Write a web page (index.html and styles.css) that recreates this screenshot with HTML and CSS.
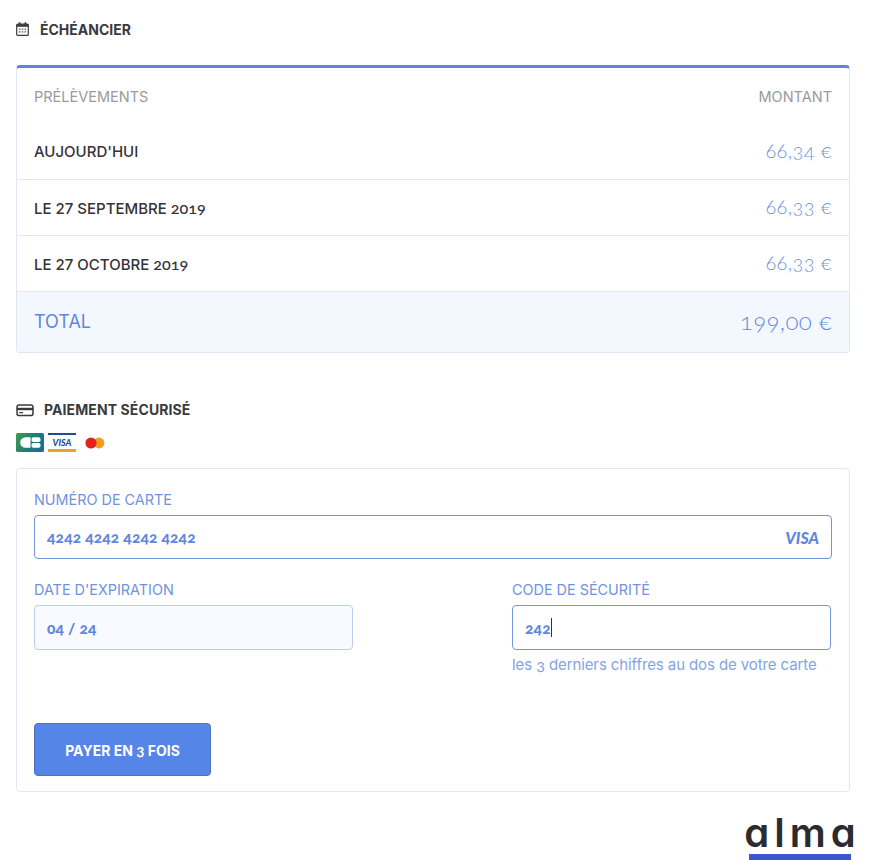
FILE: index.html
```html
<!DOCTYPE html>
<html lang="fr">
<head>
<meta charset="utf-8">
<title>Paiement</title>
<link rel="stylesheet" href="styles.css">
</head>
<body>
<main class="page">
  <h2 class="heading heading-schedule">
    <svg class="heading-icon" viewBox="0 0 13 14" width="13" height="14"><path d="M.7 3.2a1 1 0 0 1 1-1h9.6a1 1 0 0 1 1 1v9.2a1 1 0 0 1-1 1H1.700a1 1 0 0 1-1-1z" fill="none" stroke="#3a3a3e" stroke-width="1.2"/><rect x=".7" y="2.200" width="11.600" height="2.600" fill="#3a3a3e"/><rect x="2.800" y="0.300" width="1.700" height="3" fill="#3a3a3e"/><rect x="8.500" y="0.300" width="1.700" height="3" fill="#3a3a3e"/><path d="M3 7.200h1.500M5.800 7.200h1.500M8.500 7.200h1.500M3 9.900h1.500M5.800 9.900h1.500M8.500 9.900h1.500" stroke="#55555a" stroke-width="1.200"/></svg>
    <span>ÉCHÉANCIER</span>
  </h2>
  <section class="schedule">
    <div class="row row-head"><span>PRÉLÈVEMENTS</span><span>MONTANT</span></div>
    <div class="row row-first"><span class="date">AUJOURD'HUI</span><span class="amount">66,34 €</span></div>
    <div class="row row-line"><span class="date">LE 27 SEPTEMBRE <span class="num">2019</span></span><span class="amount">66,33 €</span></div>
    <div class="row row-line"><span class="date">LE 27 OCTOBRE <span class="num">2019</span></span><span class="amount">66,33 €</span></div>
    <div class="row row-total"><span class="total-label">TOTAL</span><span class="total-amount">199,00 €</span></div>
  </section>

  <h2 class="heading heading-pay">
    <svg class="heading-icon" viewBox="0 0 18 14" width="18" height="14"><rect x="1" y="2" width="16" height="10.600" rx="2.200" fill="none" stroke="#3a3a3e" stroke-width="1.500"/><rect x="1" y="4.800" width="16" height="2.400" fill="#3a3a3e"/><rect x="3.200" y="9" width="4" height="1.200" fill="#3a3a3e"/></svg>
    <span>PAIEMENT SÉCURISÉ</span>
  </h2>
  <div class="brands">
    <svg viewBox="0 0 28 19" width="28" height="19"><defs><linearGradient id="cb" x1="0" y1="0" x2="1" y2="0.400"><stop offset="0" stop-color="#3f9a4e"/><stop offset="0.600" stop-color="#1f7f78"/><stop offset="1" stop-color="#1d6f8a"/></linearGradient></defs><rect width="28" height="19" rx="1.500" fill="url(#cb)"/><path d="M14.500 4.200H9.500a5.300 5.300 0 0 0 0 10.600h5z" fill="#fff"/><rect x="15.500" y="4.200" width="9" height="4.800" rx="1.800" fill="#fff"/><rect x="15.500" y="10" width="9" height="4.800" rx="1.800" fill="#fff"/></svg>
    <div class="brand-visa"><span>VISA</span></div>
    <svg class="brand-mc" viewBox="0 0 20 12" width="20" height="12"><circle cx="14" cy="6" r="5.400" fill="#f39a1f"/><circle cx="6" cy="6" r="5.600" fill="#e2231a"/></svg>
  </div>

  <section class="card-form">
    <label class="label label-number">NUMÉRO DE CARTE</label>
    <div class="field field-active field-number"><span class="value">4242 4242 4242 4242</span><span class="visa-mark">VISA</span></div>
    <div class="two-cols">
      <div>
        <label class="label">DATE D'EXPIRATION</label>
        <div class="field field-filled"><span class="value">04 / 24</span></div>
      </div>
      <div>
        <label class="label">CODE DE SÉCURITÉ</label>
        <div class="field field-focus"><span class="value">242</span><span class="caret"></span></div>
        <p class="hint">les <span class="num">3</span> derniers chiffres au dos de votre carte</p>
      </div>
    </div>
    <button class="pay" type="button">PAYER EN <span class="num">3</span> FOIS</button>
  </section>

  <div class="logo-wrap"><div class="logo"><span class="logo-text">alma</span></div></div>
</main>
</body>
</html>
```
FILE: styles.css
```css
* { box-sizing: border-box; }
html, body { margin: 0; padding: 0; background: #fff; }
body {
  font-family: "Lato", "Open Sans", sans-serif;
  font-variant-numeric: oldstyle-nums;
  color: #333;
  height: 860px;
  overflow: hidden;
}
.page { margin-left: 16px; width: 834px; }
.num { font-family: "Lato", sans-serif; font-variant-numeric: oldstyle-nums; font-size: 1.08em; }
.heading {
  display: flex; align-items: center; margin: 0;
  font-size: 14px; font-weight: 700; color: #3a3a3e; line-height: 16px;
  font-family: "Inter", sans-serif;
}
.heading-schedule { padding-top: 22px; height: 65px; align-items: flex-start; gap: 11px; }
.heading-pay { margin-top: 49px; height: 16px; gap: 10px; }
.heading-pay span { letter-spacing: 0.1px; }
.heading-icon { flex: none; }

.schedule {
  border: 1px solid #e1e6f2; border-top: 3px solid #5a86e0; border-radius: 4px; overflow: hidden;
  height: 288px;
  display: flex; flex-direction: column;
}
.row { display: flex; justify-content: space-between; align-items: center; padding: 0 17px; }
.row-head { height: 56px; font-size: 14.5px; color: #9a9a9e; font-family: "Inter", sans-serif; font-weight: 400; }
.row-first { height: 55px; }
.row-line { height: 56px; border-top: 1px solid #e4e7ee; }
.date { font-family: "Inter", sans-serif; font-size: 15px; font-weight: 500; color: #333338; }
.amount { font-size: 20px; font-weight: 300; color: #6f93de; padding-bottom: 4px; letter-spacing: 0.4px; }
.row-total { flex: 1; background: #f3f7fe; border-top: 1px solid #e1e6f2; }
.total-label { font-family: "Inter", sans-serif; font-size: 18px; color: #5f87dd; padding-bottom: 2px; }
.total-amount { font-size: 24px; font-weight: 300; color: #6589dc; padding-bottom: 3px; letter-spacing: 0.3px; }

.brands { display: flex; align-items: center; gap: 4px; margin-top: 15px; height: 19px; }
.brand-visa {
  width: 28px; height: 19px; background: #fff;
  border-top: 2px solid #1f4e94; border-bottom: 3px solid #eaa02c;
  display: flex; align-items: center; justify-content: center;
}
.brand-visa span { font-size: 9px; font-weight: 900; font-style: italic; color: #1f4e94; line-height: 1; }
.brand-mc { margin-left: 5px; }

.card-form {
  margin-top: 16px; height: 324px;
  border: 1px solid #e4e7f2; border-radius: 4px;
  padding: 21px 17px 0;
}
.label {
  display: block; height: 20px; line-height: 20px;
  font-family: "Inter", sans-serif; font-size: 14.4px; color: #6f93de;
}
.field {
  margin-top: 5px; height: 45px; border-radius: 4px; border: 1px solid #7395de;
  display: flex; align-items: center; padding: 0 12px;
  font-family: "Lato", sans-serif; font-size: 15.5px; font-weight: 900; color: #5f87dd;
}
.field-number { height: 44px; justify-content: space-between; }
.value { font-variant-numeric: oldstyle-nums; letter-spacing: 0.2px; }
.visa-mark { font-weight: 900; font-style: italic; font-size: 16px; color: #5f87dd; }
.field-filled { background: #f8faff; border-color: #bccdf0; }
.field-focus { padding-right: 0; }
.caret { width: 1px; height: 19px; background: #333; }
.two-cols { display: grid; grid-template-columns: 319px 319px; gap: 159px; margin-top: 21px; }
.hint { margin: 5px 0 0; font-size: 15px; line-height: 18px; color: #84a3e6; font-family: "Inter", sans-serif; font-weight: 400; letter-spacing: -0.1px; }
.pay {
  display: block; margin-top: 49px; width: 177px; height: 53px;
  background: #5585e6; border: 1px solid #4f72bd; border-radius: 4px;
  color: #fff; font-family: "Inter", sans-serif; font-size: 14px; font-weight: 700;
  padding: 0;
}
.logo-wrap { display: flex; justify-content: flex-end; margin-top: 24px; margin-right: -1px; }
.logo {
  width: 102px; border-bottom: 6px solid #3a55d0;
  display: flex; justify-content: center;
  height: 44px;
}
.logo-text {
  font-family: "Inter", sans-serif; font-feature-settings: "cv11"; font-size: 40px; font-weight: 600; line-height: 34px;
  letter-spacing: 5px; margin-right: -5px; color: #2c2c2e;
}
```
